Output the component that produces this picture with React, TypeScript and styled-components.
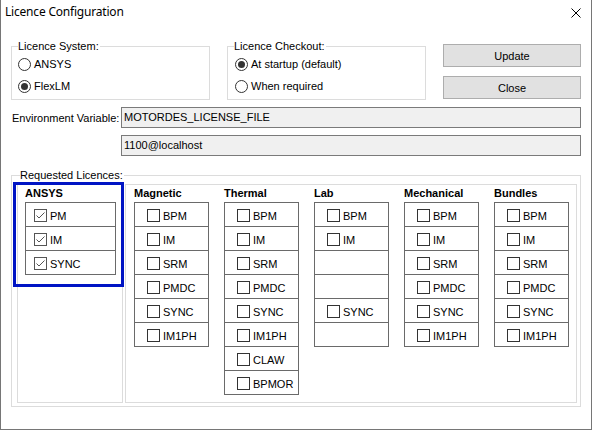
import React from "react";
import styled, { createGlobalStyle } from "styled-components";

const GlobalStyle = createGlobalStyle`
  html, body {
    margin: 0;
    padding: 0;
    background: #ffffff;
  }
  * {
    box-sizing: border-box;
  }
`;

const ansysItems = ["PM", "IM", "SYNC"];

const columns = [
  { title: "Magnetic", items: ["BPM", "IM", "SRM", "PMDC", "SYNC", "IM1PH"] },
  { title: "Thermal", items: ["BPM", "IM", "SRM", "PMDC", "SYNC", "IM1PH", "CLAW", "BPMOR"] },
  { title: "Lab", items: ["BPM", "IM", "", "", "SYNC", ""] },
  { title: "Mechanical", items: ["BPM", "IM", "SRM", "PMDC", "SYNC", "IM1PH"] },
  { title: "Bundles", items: ["BPM", "IM", "SRM", "PMDC", "SYNC", "IM1PH"] },
];

const Window = styled.div`
  width: 592px;
  height: 430px;
  display: flex;
  flex-direction: column;
  background: #ffffff;
  border-left: 1px solid #767676;
  border-right: 1px solid #767676;
  border-bottom: 1px solid #767676;
  font-family: "Liberation Sans", Arial, sans-serif;
  font-size: 11px;
  color: #000;
`;

const TitleBar = styled.div`
  height: 30px;
  flex: none;
  display: flex;
  align-items: flex-start;
  justify-content: space-between;
  padding: 4px 10px 0 4px;
`;

const Title = styled.div`
  font-family: "Noto Sans", "Open Sans", sans-serif;
  font-size: 12px;
  line-height: 16px;
  letter-spacing: -0.2px;
`;

const CloseIcon = styled.svg`
  margin-top: 4px;
  display: block;
`;

const Body = styled.div`
  padding: 10px 10px 0 10px;
  display: flex;
  flex-direction: column;
`;

const TopRow = styled.div`
  display: flex;
  align-items: flex-start;
  gap: 17px;
`;

const Group = styled.fieldset<{ $width?: number; $pad: string }>`
  margin: 0;
  min-width: 0;
  width: ${(p) => (p.$width ? `${p.$width}px` : "auto")};
  padding: ${(p) => p.$pad};
  border: 1px solid #dcdcdc;
`;

const RequestedGroup = styled(Group)`
  margin-top: 13px;
`;

const Legend = styled.legend<{ $offset?: number }>`
  padding: 0 1px 0 0;
  margin-left: ${(p) => p.$offset ?? 0}px;
  font-size: 11px;
  line-height: 12px;
`;

const RadioRow = styled.div`
  height: 22px;
  display: flex;
  align-items: center;
  gap: 3px;
`;

const RadioCircle = styled.span<{ $checked?: boolean }>`
  width: 13px;
  height: 13px;
  border-radius: 50%;
  border: 1px solid #333;
  background: #fff;
  display: flex;
  align-items: center;
  justify-content: center;
  &::after {
    content: "";
    width: 7px;
    height: 7px;
    border-radius: 50%;
    background: ${(p) => (p.$checked ? "#333" : "transparent")};
  }
`;

const ButtonStack = styled.div`
  margin-left: auto;
  margin-top: 4px;
  display: flex;
  flex-direction: column;
  gap: 9px;
`;

const DialogButton = styled.button`
  width: 138px;
  height: 23px;
  margin: 0;
  padding: 0;
  background: #e1e1e1;
  border: 1px solid #adadad;
  font-family: "Liberation Sans", Arial, sans-serif;
  font-size: 11px;
  color: #000;
`;

const EnvGrid = styled.div`
  margin-top: 7px;
  display: grid;
  grid-template-columns: 110px 1fr;
  row-gap: 7px;
  align-items: center;
`;

const EnvLabel = styled.div`
  padding-left: 1px;
  padding-top: 1px;
`;

const TextField = styled.div`
  grid-column: 2;
  height: 21px;
  line-height: 19px;
  padding-left: 2px;
  background: #f0f0f0;
  border: 1px solid #7a7a7a;
`;

const PanelRow = styled.div`
  height: 219px;
  display: flex;
  gap: 2px;
`;

const Panel = styled.div<{ $width?: number; $padLeft: number }>`
  position: relative;
  width: ${(p) => (p.$width ? `${p.$width}px` : "auto")};
  flex: ${(p) => (p.$width ? "none" : "1")};
  border: 1px solid #dcdcdc;
  padding: 2px 0 0 ${(p) => p.$padLeft}px;
  display: grid;
  grid-template-columns: repeat(auto-fill, 75px);
  column-gap: 15px;
  align-content: start;
`;

const Highlight = styled.div`
  position: absolute;
  left: -5px;
  top: -3px;
  width: 111px;
  height: 105px;
  border: 3px solid #0014c4;
  pointer-events: none;
`;

const Column = styled.div<{ $width?: number }>`
  width: ${(p) => p.$width ?? 75}px;
  display: flex;
  flex-direction: column;
`;

const ColumnTitle = styled.div`
  font-weight: bold;
  line-height: 13px;
  margin-bottom: 2px;
`;

const OptionBox = styled.div`
  border: 1px solid #6a6a6a;
`;

const OptionRow = styled.div<{ $inset: number }>`
  height: 24px;
  border-top: 1px solid #6a6a6a;
  display: flex;
  align-items: center;
  gap: 3px;
  padding: 2px 0 0 ${(p) => p.$inset}px;
  &:first-child {
    height: 23px;
    border-top: none;
  }
`;

const CheckBox = styled.span<{ $checked?: boolean }>`
  width: 13px;
  height: 13px;
  flex: none;
  border: 1px solid ${(p) => (p.$checked ? "#555" : "#333")};
  background: #fff;
  display: flex;
  align-items: center;
  justify-content: center;
`;

const Check = () => (
  <svg width="11" height="11" viewBox="0 0 11 11">
    <polyline points="1.5,5.5 4,8 9.5,2.5" fill="none" stroke="#555" strokeWidth="1" />
  </svg>
);

const Option = ({ label, inset, checked }: { label: string; inset: number; checked?: boolean }) => (
  <OptionRow $inset={inset}>
    {label && (
      <>
        <CheckBox $checked={checked}>{checked && <Check />}</CheckBox>
        <span>{label}</span>
      </>
    )}
  </OptionRow>
);

export default function App() {
  return (
    <>
      <GlobalStyle />
      <Window>
        <TitleBar>
          <Title>Licence Configuration</Title>
          <CloseIcon width="10" height="10" viewBox="0 0 10 10">
            <path d="M0.5 0.5 L9.5 9.5 M9.5 0.5 L0.5 9.5" stroke="#000" strokeWidth="1" />
          </CloseIcon>
        </TitleBar>
        <Body>
          <TopRow>
            <Group $width={199} $pad="1px 6px 2px 6px">
              <Legend>Licence System:</Legend>
              <RadioRow>
                <RadioCircle />
                <span>ANSYS</span>
              </RadioRow>
              <RadioRow>
                <RadioCircle $checked />
                <span>FlexLM</span>
              </RadioRow>
            </Group>
            <Group $width={199} $pad="1px 6px 2px 7px">
              <Legend $offset={-1}>Licence Checkout:</Legend>
              <RadioRow>
                <RadioCircle $checked />
                <span>At startup (default)</span>
              </RadioRow>
              <RadioRow>
                <RadioCircle />
                <span>When required</span>
              </RadioRow>
            </Group>
            <ButtonStack>
              <DialogButton>Update</DialogButton>
              <DialogButton>Close</DialogButton>
            </ButtonStack>
          </TopRow>

          <EnvGrid>
            <EnvLabel>Environment Variable:</EnvLabel>
            <TextField>MOTORDES_LICENSE_FILE</TextField>
            <TextField>1100@localhost</TextField>
          </EnvGrid>

          <RequestedGroup $pad="3px 3px 3px 5px">
            <Legend $offset={3}>Requested Licences:</Legend>
            <PanelRow>
              <Panel $width={106} $padLeft={7}>
                <Column $width={91}>
                  <ColumnTitle>ANSYS</ColumnTitle>
                  <OptionBox>
                    {ansysItems.map((it) => (
                      <Option key={it} label={it} inset={8} checked />
                    ))}
                  </OptionBox>
                </Column>
                <Highlight />
              </Panel>
              <Panel $padLeft={8}>
                {columns.map((col) => (
                  <Column key={col.title}>
                    <ColumnTitle>{col.title}</ColumnTitle>
                    <OptionBox>
                      {col.items.map((it, i) => (
                        <Option key={i} label={it} inset={12} />
                      ))}
                    </OptionBox>
                  </Column>
                ))}
              </Panel>
            </PanelRow>
          </RequestedGroup>
        </Body>
      </Window>
    </>
  );
}
